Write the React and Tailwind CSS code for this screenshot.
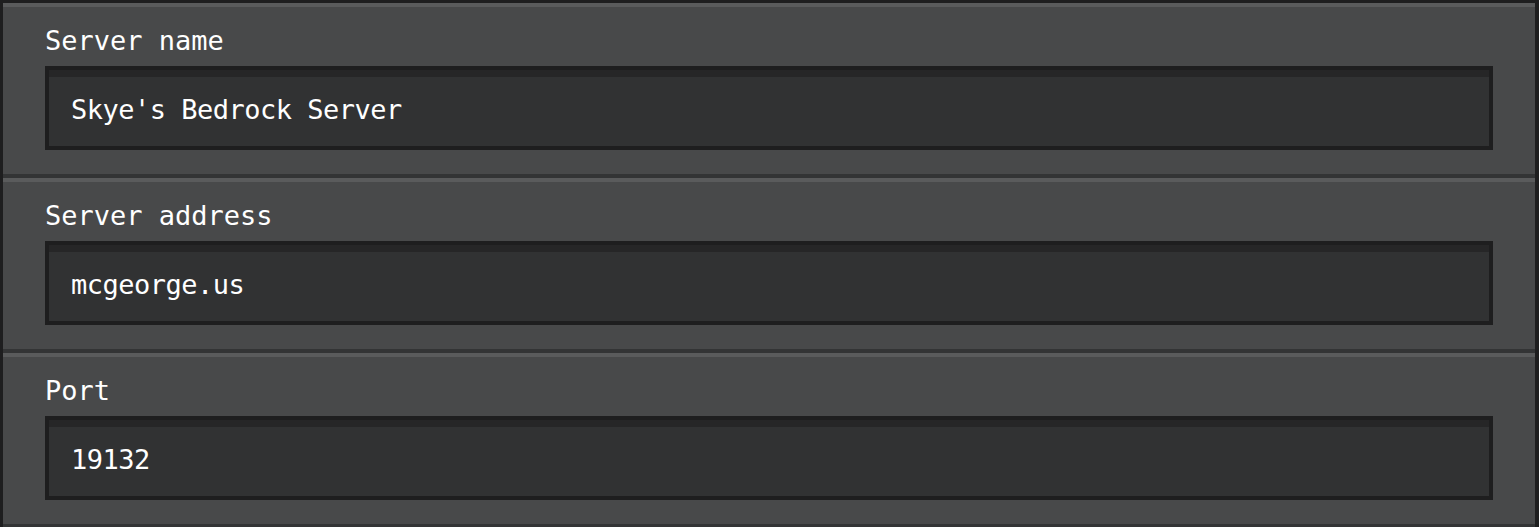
import React from "react";

const fields = [
  { label: "Server name", value: "Skye's Bedrock Server" },
  { label: "Server address", value: "mcgeorge.us" },
  { label: "Port", value: "19132" },
];

// One settings row: highlight on top, dark edge underneath
const Field = ({ label, value }) => (
  <div className="border-t-4 border-b-4 border-t-[#5a5b5c] border-b-[#333435] bg-[#48494a] px-[42px] pt-[20px] pb-[24px]">
    <div className="h-[27px] text-[27px] leading-[27px] text-white">{label}</div>
    <div className="mt-[12px] h-[84px] border-4 border-[#1e1e1f] bg-[#313233]">
      <div className="flex h-full items-center border-t-[7px] border-[#262627] pb-[4px] pl-[22px]">
        <span className="text-[27px] leading-[27px] tracking-[-0.5px] text-white">{value}</span>
      </div>
    </div>
  </div>
);

export default function App() {
  return (
    <div className="h-[527px] w-[1539px] overflow-hidden bg-[#1e1e1f] pt-[3px] pl-[3px] pr-[4px] font-['DejaVu_Sans_Mono',monospace]">
      <div className="flex flex-col">
        {fields.map((f) => (
          <Field key={f.label} label={f.label} value={f.value} />
        ))}
      </div>
    </div>
  );
}
